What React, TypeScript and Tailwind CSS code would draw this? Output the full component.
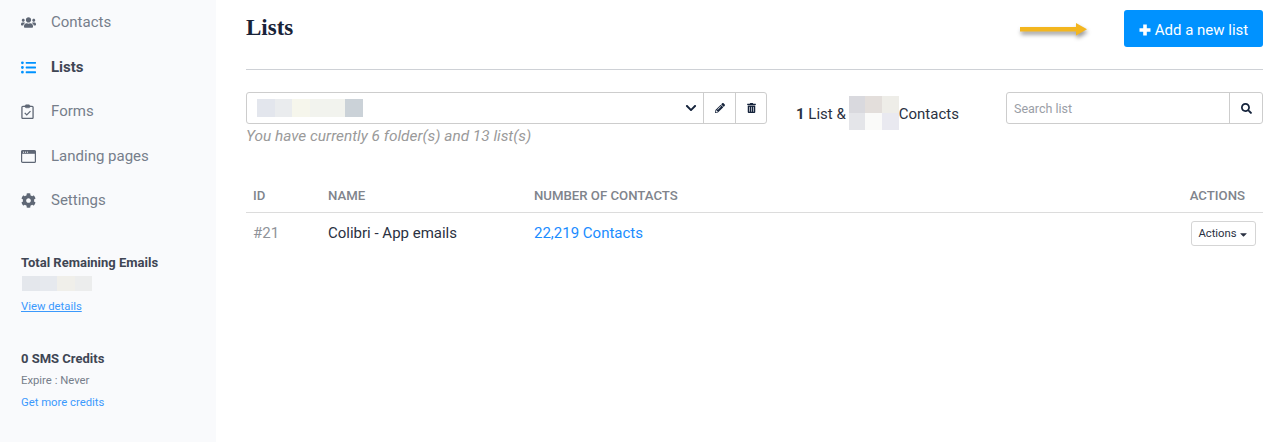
import { FaUsers, FaListUl, FaCog, FaSearch, FaPencilAlt, FaTrashAlt, FaChevronDown, FaCaretDown } from "react-icons/fa"

const ClipboardIcon = () => (
  <svg viewBox="0 0 14 16" className="w-[13px] h-[15px]" fill="none" stroke="currentColor">
    <rect x="1" y="2.5" width="12" height="13" rx="1" strokeWidth="1.4" />
    <rect x="4.5" y="0.8" width="5" height="3.2" rx="1" fill="currentColor" strokeWidth="0.6" />
    <path d="M4 9.5l2.2 2.2L10.2 7.6" strokeWidth="1.4" />
  </svg>
)

const WindowIcon = () => (
  <svg viewBox="0 0 15 13" className="w-[15px] h-[13px]" fill="none">
    <rect x="0.6" y="0.6" width="13.8" height="11.8" rx="1" stroke="currentColor" strokeWidth="1.2" />
    <rect x="0.6" y="0.6" width="13.8" height="3.2" fill="currentColor" />
    <path d="M2 2.2h1M4 2.2h1M6 2.2h1" stroke="#f9fafc" strokeWidth="1" />
  </svg>
)

const PlusIcon = () => (
  <svg viewBox="0 0 12 12" className="w-[12px] h-[12px]" fill="currentColor">
    <path d="M4.2 0.5h3.6v3.7h3.7v3.6H7.8v3.7H4.2V7.8H0.5V4.2h3.7z" />
  </svg>
)

const navItems = [
  { label: "Contacts", icon: <FaUsers className="w-[15px] h-[15px]" /> },
  { label: "Lists", icon: <FaListUl className="w-[15px] h-[15px] text-[#0092ff]" />, active: true },
  { label: "Forms", icon: <ClipboardIcon /> },
  { label: "Landing pages", icon: <WindowIcon /> },
  { label: "Settings", icon: <FaCog className="w-[15px] h-[15px]" /> },
]

const selectBlocks = ["#e3e6ed", "#eaecee", "#f6f6ec", "#f2f3ee", "#f2f3ee", "#cbd2d8"]
const emailBlocks = ["#e4e7ec", "#e6e9ee", "#f0efea", "#eceded"]
const contactBlocksTop = ["#d9d9de", "#e3dedb", "#eeede8"]
const contactBlocksBottom = ["#e4e5e9", "#fafaf9", "#e9e9f0"]

function Blocks({ colors, cell }: { colors: string[]; cell: string }) {
  return (
    <div className="flex">
      {colors.map((c, i) => (
        <div key={i} className={cell} style={{ backgroundColor: c }} />
      ))}
    </div>
  )
}

export default function App() {
  return (
    <div className="h-[442px] w-[1283px] overflow-hidden flex bg-white font-['Roboto',sans-serif]">
      {/* Sidebar */}
      <aside className="w-[216px] shrink-0 bg-[#f9fafc] pl-[21px]">
        <nav className="flex flex-col pt-[11.5px]">
          {navItems.map((item) => (
            <div key={item.label} className="flex items-center h-[22px] mb-[22.5px]">
              <span className="w-[30px] shrink-0 flex items-center text-[#5f6775]">{item.icon}</span>
              <span className={item.active ? "text-[15px] font-bold text-[#3f4654]" : "text-[15px] text-[#767e8b]"}>
                {item.label}
              </span>
            </div>
          ))}
        </nav>
        <div className="mt-[20px]">
          <p className="font-bold text-[13px] leading-[18px] text-[#3f4654]">Total Remaining Emails</p>
          <div className="mt-[4px] ml-px">
            <Blocks colors={emailBlocks} cell="w-[17.5px] h-[15px]" />
          </div>
          <a className="block mt-[7px] text-[11.3px] leading-[18px] text-[#3b99fc] underline">View details</a>
          <p className="mt-[34px] font-bold text-[13px] leading-[18px] text-[#3f4654]">0 SMS Credits</p>
          <p className="mt-[4px] text-[11.3px] leading-[18px] text-[#767e8b]">Expire : Never</p>
          <a className="block mt-[4px] text-[11.3px] leading-[18px] text-[#3b99fc]">Get more credits</a>
        </div>
      </aside>

      {/* Main */}
      <main className="flex-1 pl-[30px] pr-[20px]">
        <header className="flex items-start h-[70px] border-b border-[#ced1d6] pt-[10px]">
          <h1 className="font-['Liberation_Serif',serif] font-bold text-[23px] leading-[35px] text-[#182338]">Lists</h1>
          <svg viewBox="0 0 68 14" className="ml-auto mr-[36px] mt-[12px] w-[68px] h-[14px] overflow-visible drop-shadow-[1px_3px_2px_rgba(0,0,0,0.4)]">
            <path d="M0 5h56v4.5H0z" fill="#f3b61f" />
            <path d="M56 1l11 6.2L56 13.4z" fill="#f3b61f" />
          </svg>
          <button className="w-[139px] h-[37px] pt-[3px] rounded-[3px] bg-[#0092ff] text-white text-[15px] flex items-center justify-center gap-[4px]">
            <PlusIcon />
            Add a new list
          </button>
        </header>

        {/* Filters */}
        <div className="flex items-start mt-[22px]">
          <div className="w-[521px] shrink-0">
            <div className="flex h-[32px] border border-[#cdcdcd] rounded-[3px] text-[#15233b]">
              <div className="flex-1 flex items-center pl-[10px] pr-[6px] justify-between">
                <Blocks colors={selectBlocks} cell="w-[17.67px] h-[18px]" />
                <FaChevronDown className="w-[12px] h-[12px]" />
              </div>
              <div className="w-[32px] flex items-center justify-center border-l border-[#cdcdcd]">
                <FaPencilAlt className="w-[10px] h-[10px]" />
              </div>
              <div className="w-[31px] flex items-center justify-center border-l border-[#cdcdcd]">
                <FaTrashAlt className="w-[9px] h-[10px]" />
              </div>
            </div>
            <p className="mt-[2px] text-[15.4px] leading-[20px] italic text-[#9a9a9a]">You have currently 6 folder(s) and 13 list(s)</p>
          </div>

          <div className="ml-[29px] w-[210px] shrink-0 flex items-center h-[34px] mt-[4px] text-[15px] text-[#2a3142]">
            <span className="mt-[2px]"><b className="font-bold">1</b> List &amp;</span>
            <div className="ml-[3px]">
              <Blocks colors={contactBlocksTop} cell="w-[16.67px] h-[17px]" />
              <Blocks colors={contactBlocksBottom} cell="w-[16.67px] h-[17px]" />
            </div>
            <span className="mt-[2px]">Contacts</span>
          </div>

          <div className="flex flex-1 h-[32px] border border-[#cdcdcd] rounded-[3px]">
            <div className="flex-1 flex items-center pl-[7px] pt-[3px] text-[12.5px] text-[#9a9ea6]">Search list</div>
            <div className="w-[33px] flex items-center justify-center border-l border-[#cdcdcd] text-[#15233b]">
              <FaSearch className="w-[11px] h-[11px]" />
            </div>
          </div>
        </div>

        {/* Table */}
        <div className="mt-[34px] h-[33px] flex items-center border-b border-[#dcdcdc] text-[13.2px] font-medium text-[#80848c] pl-[7px] pr-[18px]">
          <span className="w-[75px]">ID</span>
          <span className="w-[206px]">NAME</span>
          <span className="flex-1">NUMBER OF CONTACTS</span>
          <span>ACTIONS</span>
        </div>
        <div className="flex items-center h-[40px] px-[7px] text-[15px]">
          <span className="w-[75px] text-[#8f9399]">#21</span>
          <span className="w-[206px] text-[#2a3142]">Colibri - App emails</span>
          <a className="flex-1 text-[#1a8cff]">22,219 Contacts</a>
          <button className="w-[65px] h-[25px] pt-[2px] flex items-center justify-center gap-px border border-[#d5d5d5] rounded-[3px] text-[11.3px] text-[#2a3142]">
            Actions
            <FaCaretDown className="w-[11px] h-[11px]" />
          </button>
        </div>
      </main>
    </div>
  )
}
